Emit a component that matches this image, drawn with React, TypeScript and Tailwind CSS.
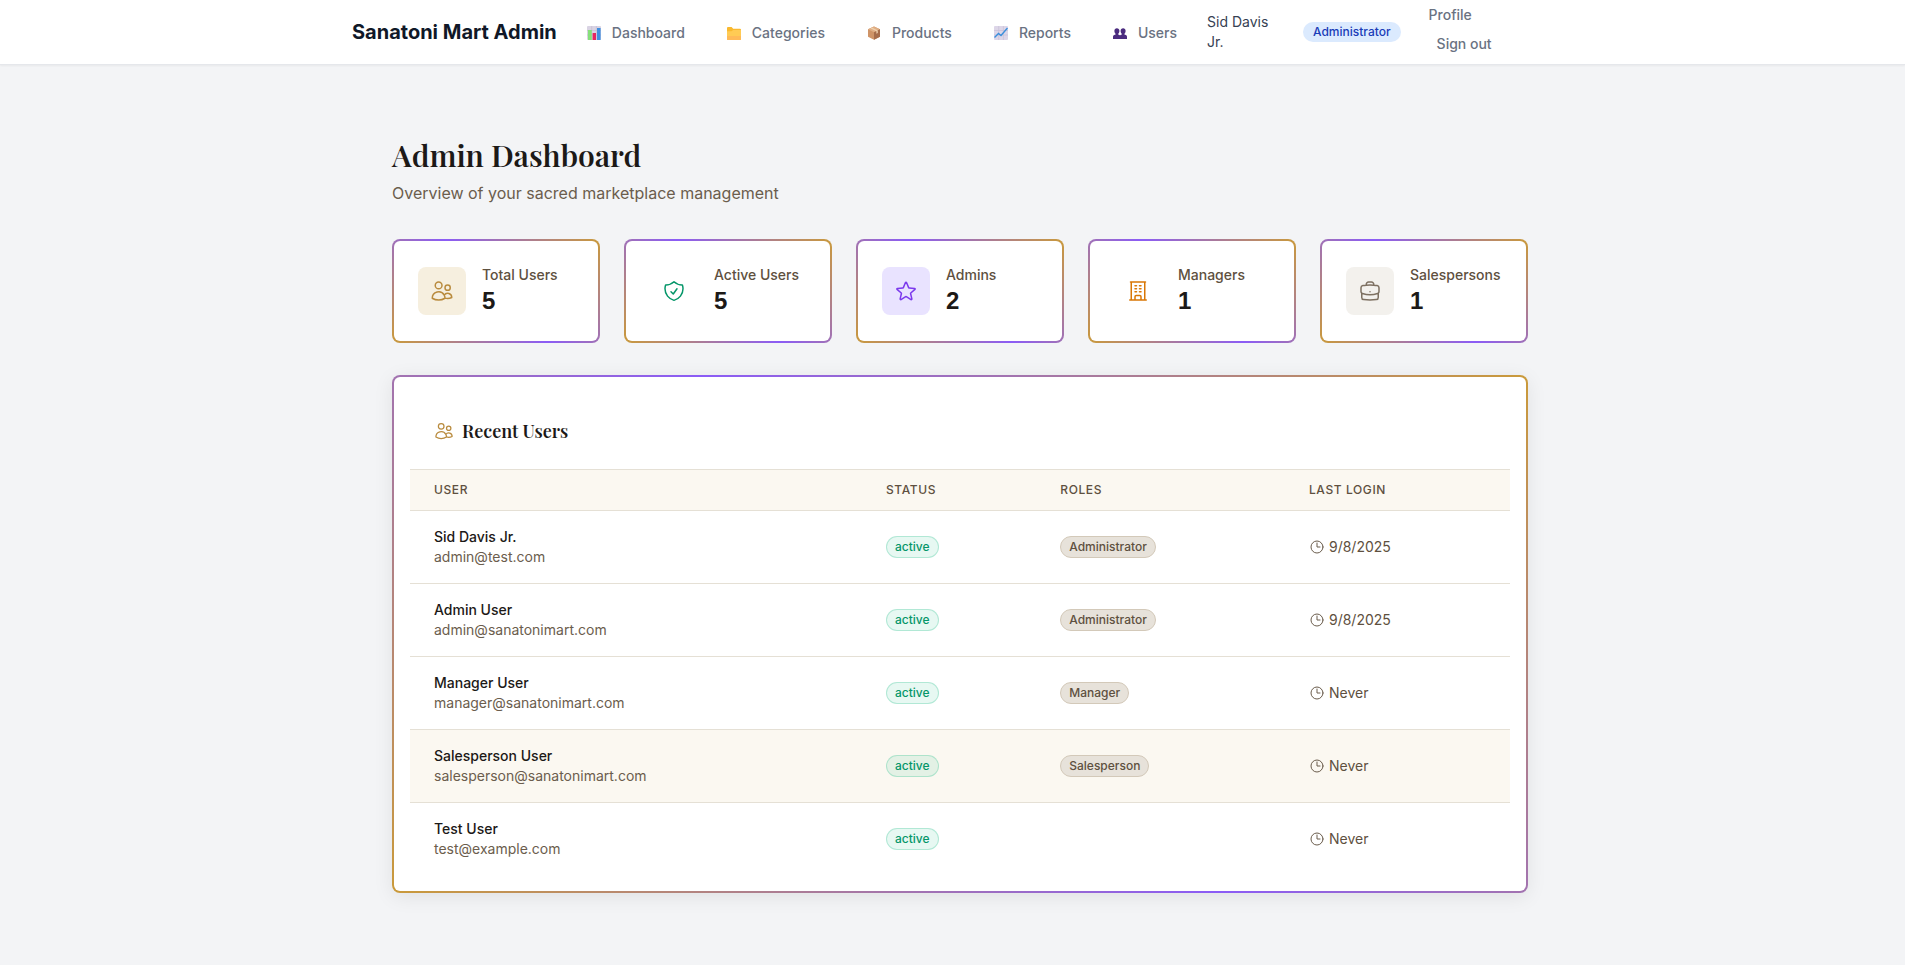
import type { ReactNode } from "react";
import type { IconType } from "react-icons";
import {
  HiOutlineBriefcase,
  HiOutlineBuildingOffice,
  HiOutlineClock,
  HiOutlineShieldCheck,
  HiOutlineStar,
  HiOutlineUsers,
} from "react-icons/hi2";

const gradientBorder =
  "border-2 border-transparent rounded-lg [background:linear-gradient(#fff,#fff)_padding-box,linear-gradient(45deg,#ca9a3a,#8b5cf6,#ca9a3a)_border-box]";

function ChartIcon() {
  return (
    <svg viewBox="0 0 14 14" className="size-3.5" aria-hidden="true">
      <rect width="14" height="14" rx="1" fill="#d9d3e3" />
      <path d="M0 4.5h14M0 9h14M4.7 0v14M9.4 0v14" stroke="#c2bacf" strokeWidth=".6" />
      <rect x="1" y="4" width="3.8" height="10" fill="#86e07a" />
      <rect x="5.6" y="7" width="3.4" height="7" fill="#e5265f" />
      <rect x="10" y="2" width="3.6" height="12" fill="#3f8fe0" />
    </svg>
  );
}

function FolderIcon() {
  return (
    <svg viewBox="0 0 14 14" className="size-3.5" aria-hidden="true">
      <path d="M0 2a1 1 0 0 1 1-1h3.6l1.6 1.7H13a1 1 0 0 1 1 1V13a1 1 0 0 1-1 1H1a1 1 0 0 1-1-1z" fill="#f9b92f" />
      <path d="M0 5.2h4.5L6.2 4H14v9a1 1 0 0 1-1 1H1a1 1 0 0 1-1-1z" fill="#ffcb54" />
      <path d="M0 10h14v3a1 1 0 0 1-1 1H1a1 1 0 0 1-1-1z" fill="#ffba58" />
    </svg>
  );
}

function BoxIcon() {
  return (
    <svg viewBox="0 0 14 14" className="size-3.5" aria-hidden="true">
      <path d="M7 .5l6 2.8v7.4L7 13.8l-6-3.1V3.3z" fill="#cf9467" />
      <path d="M7 .5l6 2.8-6 3-6-3z" fill="#dfae84" />
      <path d="M7 6.3l6-3v7.4L7 13.8z" fill="#a66d4b" />
      <path d="M3.4 2.2l6 3v2.6l1.4-.7V4.4L4.9 1.5z" fill="#efd0ad" />
    </svg>
  );
}

function TrendIcon() {
  return (
    <svg viewBox="0 0 14 14" className="size-3.5" aria-hidden="true">
      <rect width="14" height="14" rx="1" fill="#ddd6e8" />
      <path d="M0 4.5h14M0 9h14M4.7 0v14M9.4 0v14" stroke="#c5bcd4" strokeWidth=".6" />
      <path d="M.5 11.5l4-4 2.5 2L13.5 2" fill="none" stroke="#3a8fdc" strokeWidth="1.4" />
    </svg>
  );
}

function PeopleIcon() {
  return (
    <svg viewBox="0 0 14 14" className="size-3.5" fill="#4b2c7f" aria-hidden="true">
      <path d="M3.900 2.200c1.500 0 2.500 1 2.500 2.600 0 1.300-.4 2.300-1.200 2.900v.9l1.300.5.5.5.5-.5 1.300-.5v-.9C8 7.100 7.600 6.100 7.600 4.800c0-1.600 1-2.600 2.500-2.600s2.500 1 2.500 2.600c0 1.300-.4 2.300-1.200 2.900v.9l1.400.5c.8.300 1.200 1 1.200 1.900v2H0v-2c0-.9.4-1.600 1.200-1.900l1.400-.5v-.9C1.800 7.100 1.400 6.100 1.400 4.800c0-1.600 1-2.600 2.500-2.600z" />
    </svg>
  );
}

const navItems: { label: string; icon: ReactNode }[] = [
  { label: "Dashboard", icon: <ChartIcon /> },
  { label: "Categories", icon: <FolderIcon /> },
  { label: "Products", icon: <BoxIcon /> },
  { label: "Reports", icon: <TrendIcon /> },
  { label: "Users", icon: <PeopleIcon /> },
];

const stats: { label: string; value: number; icon: IconType; tone: string }[] = [
  { label: "Total Users", value: 5, icon: HiOutlineUsers, tone: "bg-[#f6efdf] text-[#b98b3e]" },
  { label: "Active Users", value: 5, icon: HiOutlineShieldCheck, tone: "text-[#059669]" },
  { label: "Admins", value: 2, icon: HiOutlineStar, tone: "bg-[#e9e3ff] text-[#7c3aed]" },
  { label: "Managers", value: 1, icon: HiOutlineBuildingOffice, tone: "text-[#d97706]" },
  { label: "Salespersons", value: 1, icon: HiOutlineBriefcase, tone: "bg-[#f3f1ed] text-[#7d7061]" },
];

const users = [
  { name: "Sid Davis Jr.", email: "admin@test.com", role: "Administrator", login: "9/8/2025" },
  { name: "Admin User", email: "admin@sanatonimart.com", role: "Administrator", login: "9/8/2025" },
  { name: "Manager User", email: "manager@sanatonimart.com", role: "Manager", login: "Never" },
  { name: "Salesperson User", email: "salesperson@sanatonimart.com", role: "Salesperson", login: "Never", active: true },
  { name: "Test User", email: "test@example.com", role: "", login: "Never" },
];

function Header() {
  return (
    <header className="border-b border-gray-200 bg-white pl-[15px] shadow-xs">
      <div className="mx-auto flex h-16 max-w-7xl items-center px-8">
        <a href="#" className="text-xl font-bold whitespace-nowrap text-gray-900">
          Sanatoni Mart Admin
        </a>
        <nav className="ml-[18px] flex items-center gap-[18px] pt-0.5">
          {navItems.map((item) => (
            <a
              key={item.label}
              href="#"
              className="flex items-center gap-[11px] px-3 text-sm font-medium text-gray-500"
            >
              {item.icon}
              {item.label}
            </a>
          ))}
        </nav>
        <div className="ml-[18px] flex items-center">
          <span className="w-[72px] text-sm text-gray-700">Sid Davis Jr.</span>
          <span className="ml-6 rounded-full bg-blue-100 px-2.5 py-0.5 text-xs font-medium text-blue-800">
            Administrator
          </span>
          <div className="ml-7 flex flex-col gap-[9px] pb-[5px] text-sm font-medium text-gray-500">
            <a href="#">Profile</a>
            <button type="button" className="px-2">
              Sign out
            </button>
          </div>
        </div>
      </div>
    </header>
  );
}

export default function App() {
  return (
    <div className="min-h-screen bg-gray-100 font-['Inter',sans-serif]">
      <Header />
      <main className="pl-[15px]">
        <div className="mx-auto max-w-7xl px-[72px] py-[72px]">
          <h1 className="font-['Playfair_Display','Liberation_Serif',serif] text-3xl leading-9 font-semibold text-[#1c1917]">
            Admin Dashboard
          </h1>
          <p className="mt-2 text-base text-[#6b5d4d]">Overview of your sacred marketplace management</p>

          <section className="mt-[34px] grid grid-cols-5 gap-6">
            {stats.map(({ label, value, icon: Icon, tone }) => (
              <div key={label} className={`flex items-center gap-4 p-6 ${gradientBorder}`}>
                <div className={`flex size-12 items-center justify-center rounded-lg ${tone}`}>
                  <Icon className="size-6" />
                </div>
                <div>
                  <p className="text-sm font-medium text-[#5e5040]">{label}</p>
                  <p className="font-['Liberation_Sans',sans-serif] text-2xl font-bold text-[#1c1917]">{value}</p>
                </div>
              </div>
            ))}
          </section>

          <section className={`mt-8 p-4 shadow-[0_4px_20px_rgba(0,0,0,0.08)] ${gradientBorder}`}>
            <h2 className="flex items-center gap-2 p-6 font-['Playfair_Display','Liberation_Serif',serif] text-lg font-semibold text-[#1c1917]">
              <HiOutlineUsers className="size-5 text-[#b98b3e]" />
              Recent Users
            </h2>
            <table className="w-full text-left">
              <thead className="border-y border-[#e5e0d5] bg-[#fbf8f1] text-xs tracking-wider text-[#5e5040] uppercase">
                <tr>
                  <th className="w-[452px] px-6 py-3 font-medium">User</th>
                  <th className="px-6 py-3 font-medium">Status</th>
                  <th className="px-6 py-3 font-medium">Roles</th>
                  <th className="px-6 py-3 font-medium">Last Login</th>
                </tr>
              </thead>
              <tbody className="divide-y divide-[#e5e0d5]">
                {users.map((user) => (
                  <tr key={user.email} className={user.active ? "bg-[#fbf8f1]" : ""}>
                    <td className="px-6 py-4 text-sm">
                      <p className="font-medium text-[#1c1917]">{user.name}</p>
                      <p className="text-[#6b5d4d]">{user.email}</p>
                    </td>
                    <td className="px-6 py-4 text-sm">
                      <span className="inline-flex rounded-full border border-[#10b981]/25 bg-[#10b981]/10 px-2 py-0.5 text-xs font-medium text-[#059669]">
                        active
                      </span>
                    </td>
                    <td className="px-6 py-4">
                      {user.role && (
                        <div className="flex">
                          <span className="rounded-full border border-[#d3c9b9] bg-[#e7e2da] px-2 py-0.5 text-xs font-medium text-[#5e5040]">
                            {user.role}
                          </span>
                        </div>
                      )}
                    </td>
                    <td className="px-6 py-4 text-sm text-[#5e5040]">
                      <span className="flex items-center gap-1">
                        <HiOutlineClock className="size-4 text-[#6b5d4d]" />
                        {user.login}
                      </span>
                    </td>
                  </tr>
                ))}
              </tbody>
            </table>
          </section>
        </div>
      </main>
    </div>
  );
}
